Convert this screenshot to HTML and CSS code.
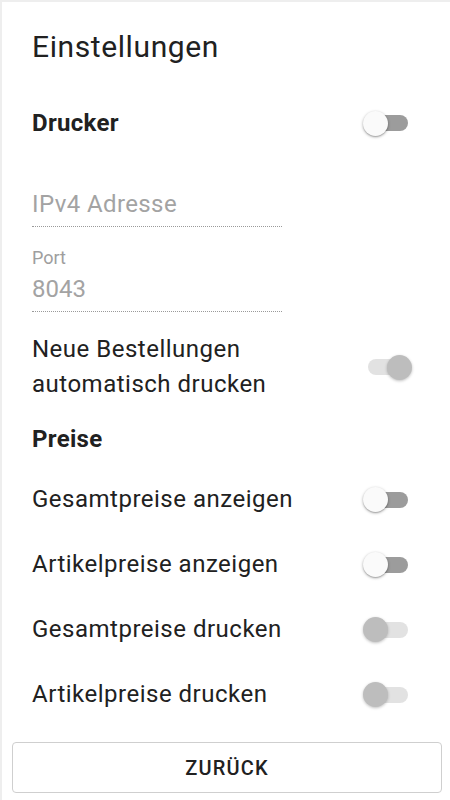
FILE: index.html
```html
<!DOCTYPE html>
<html lang="de">
<head>
<meta charset="utf-8">
<title>Einstellungen</title>
<link rel="stylesheet" href="styles.css">
</head>
<body>
<main class="card">
  <h1 class="title">Einstellungen</h1>

  <div class="row row-head">
    <span class="head">Drucker</span>
    <span class="switch off"><span class="track"></span><span class="thumb"></span></span>
  </div>

  <div class="field field-ip">
    <div class="input placeholder">IPv4 Adresse</div>
  </div>

  <div class="field field-port">
    <div class="label">Port</div>
    <div class="input value">8043</div>
  </div>

  <div class="row row-auto">
    <span class="text">Neue Bestellungen<br>automatisch drucken</span>
    <span class="switch on disabled"><span class="track"></span><span class="thumb"></span></span>
  </div>

  <div class="row row-head row-preise">
    <span class="head">Preise</span>
  </div>

  <div class="row row-item">
    <span class="text">Gesamtpreise anzeigen</span>
    <span class="switch off"><span class="track"></span><span class="thumb"></span></span>
  </div>
  <div class="row row-item">
    <span class="text">Artikelpreise anzeigen</span>
    <span class="switch off"><span class="track"></span><span class="thumb"></span></span>
  </div>
  <div class="row row-item">
    <span class="text">Gesamtpreise drucken</span>
    <span class="switch off disabled"><span class="track"></span><span class="thumb"></span></span>
  </div>
  <div class="row row-item">
    <span class="text">Artikelpreise drucken</span>
    <span class="switch off disabled"><span class="track"></span><span class="thumb"></span></span>
  </div>

  <div class="footer">
    <button class="btn" type="button">ZURÜCK</button>
  </div>
</main>
</body>
</html>
```
FILE: styles.css
```css
html, body {
  margin: 0;
  padding: 0;
  overflow: hidden;
}
body {
  background: #eeeeee;
  font-family: Roboto, "Noto Sans", "Liberation Sans", sans-serif;
  color: #212121;
  width: 450px;
  height: 800px;
}
.card {
  margin: 2px 0 0 2px;
  width: 458px;
  height: 798px;
  background: #ffffff;
  box-sizing: border-box;
  padding: 27px 48px 0 30px;
  display: flex;
  flex-direction: column;
}
.title {
  margin: 0;
  font-size: 30px;
  font-weight: 400;
  line-height: 36px;
  letter-spacing: 0.6px;
}
.row {
  display: flex;
  align-items: center;
  justify-content: space-between;
}
.row-head {
  height: 48px;
  margin-top: 34px;
}
.head {
  font-size: 24px;
  font-weight: 700;
  letter-spacing: 0.3px;
}
.text {
  font-size: 24px;
  line-height: 35px;
  letter-spacing: 0.5px;
}
.field {
  width: 250px;
  border-bottom: 1px dotted #9a9a9a;
  padding-bottom: 7px;
}
.field-ip {
  margin-top: 42px;
}
.field-port {
  margin-top: 21px;
}
.input {
  font-size: 24px;
  line-height: 30px;
  color: #a3a3a3;
  letter-spacing: 0.4px;
}
.value {
  letter-spacing: 0;
}
.label {
  font-size: 18px;
  line-height: 20px;
  color: #9e9e9e;
  margin-bottom: 6px;
}
.row-auto {
  margin-top: 20px;
}
.row-preise {
  margin-top: 13px;
}
.row-item {
  height: 65px;
}
.row-preise + .row-item {
  margin-top: 4px;
}
.switch {
  position: relative;
  width: 49px;
  height: 25px;
  flex: none;
}
.track {
  position: absolute;
  left: 5px;
  right: 4px;
  top: 4.5px;
  height: 16px;
  border-radius: 8px;
  background: #9c9c9c;
}
.thumb {
  position: absolute;
  top: 0;
  left: 0;
  width: 25px;
  height: 25px;
  border-radius: 50%;
  background: #fafafa;
  box-shadow: 0 1px 3px rgba(0, 0, 0, 0.35), 0 1px 1px rgba(0, 0, 0, 0.12);
}
.switch.on .thumb {
  left: 24px;
}
.switch.disabled .track {
  background: #e2e2e2;
}
.switch.disabled .thumb {
  background: #bdbdbd;
  box-shadow: 0 1px 3px rgba(0, 0, 0, 0.25);
}
.footer {
  margin: 15px -48px 0 -30px;
  padding: 0 18px 0 10px;
}
.btn {
  display: block;
  width: 100%;
  height: 51px;
  border: 1px solid #cfcfcf;
  border-radius: 4px;
  background: #ffffff;
  font-family: Roboto, "Noto Sans", "Liberation Sans", sans-serif;
  font-size: 20px;
  font-weight: 500;
  letter-spacing: 1.2px;
  color: #212121;
  padding: 0;
}
```
